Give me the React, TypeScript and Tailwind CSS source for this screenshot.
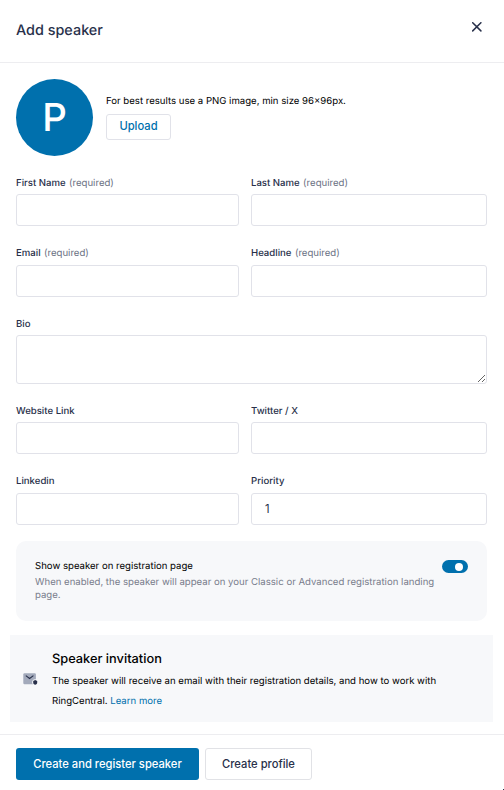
import { useState } from 'react'

type FieldProps = {
  label: string
  required?: boolean
  raised?: boolean
  value?: string
}

const Field = ({ label, required, raised, value = '' }: FieldProps) => {
  const [text, setText] = useState(value)

  return (
    <label className={`block ${raised ? '-mt-px' : ''}`}>
      <span className={`block text-[9.6px] leading-[14px] font-medium text-[#28304a] ${raised ? 'h-[18px]' : 'h-[17px]'}`}>
        {label}
        {required && <span className="ml-[0.7px] font-normal text-[#6a7183]"> (required)</span>}
      </span>
      <input
        value={text}
        onChange={e => setText(e.target.value)}
        className="block h-8 w-full rounded-[3px] border border-[#e1e2e9] bg-white px-[13px] text-[11.2px] text-[#28304a] outline-none"
      />
    </label>
  )
}

const MailIcon = () => (
  <svg width="15" height="13" viewBox="0 0 15 13" fill="none">
    <rect x="0.3" y="0.2" width="12.6" height="11" rx="1.2" fill="#a3aabb" />
    <path d="M2.8 2.6L6.6 5.5L10.4 2.6" stroke="#28304a" strokeWidth="1.1" />
    <circle cx="12.2" cy="9.2" r="3" fill="#f7f8fa" />
    <path d="M12.2 7.1l2 1v1.6c0 .9-.8 1.6-2 2.1-1.2-.5-2-1.2-2-2.1V8.1z" fill="#28304a" />
  </svg>
)

const App = () => {
  const [bio, setBio] = useState('')
  const [visible, setVisible] = useState(true)

  return (
    <div className="relative h-[790px] w-[504px] overflow-hidden bg-white font-['Inter',sans-serif] text-black antialiased [text-rendering:geometricPrecision]">
      {/* Header */}
      <header className="flex h-[63px] items-start justify-between border-b border-[#ededf0] pr-[22px] pl-4">
        <h1 className="mt-[21px] text-[14.4px] leading-5 font-medium text-[#28304a]">Add speaker</h1>
        <button aria-label="Close" className="mt-[22px]">
          <svg width="10" height="10" viewBox="0 0 10 10" stroke="#28304a" strokeWidth="1.5" strokeLinecap="round">
            <path d="M0.7 0.7L8.9 8.9M8.9 0.7L0.7 8.9" />
          </svg>
        </button>
      </header>

      <main className="h-[671px] pt-4">
        {/* Photo */}
        <div className="ml-4 flex h-[77px]">
          <div className="flex size-[77px] items-center justify-center rounded-full bg-[#0070ad] pt-0.5 text-[38.4px] leading-none font-medium text-white">
            P
          </div>
          <div className="ml-[13px] pt-4">
            <p className="text-[9.6px] leading-[14px]">For best results use a PNG image, min size 96×96px.</p>
            <button className="mt-[5px] h-[26px] w-[65px] rounded-[3px] border border-[#e1e2e9] pb-0.5 text-[11.2px] font-medium text-[#0070ad]">
              Upload
            </button>
          </div>
        </div>

        {/* Profile fields */}
        <div className="mt-[21px] ml-4 w-[471px]">
          <div className="grid grid-cols-[223px_236px] gap-x-3 gap-y-[22px]">
            <Field label="First Name" required />
            <Field label="Last Name" required />
            <Field label="Email" required raised />
            <Field label="Headline" required raised />
          </div>
          <label className="mt-[21px] block">
            <span className="block h-[17px] text-[9.6px] leading-[14px] font-medium text-[#28304a]">Bio</span>
            <textarea
              value={bio}
              onChange={e => setBio(e.target.value)}
              className="block h-[49px] w-full resize rounded-[3px] border border-[#e1e2e9] p-2 text-[11.2px] outline-none"
            />
          </label>
          <div className="mt-[21px] grid grid-cols-[223px_236px] gap-x-3 gap-y-[22px]">
            <Field label="Website Link" />
            <Field label="Twitter / X" />
            <Field label="Linkedin" raised />
            <Field label="Priority" value="1" raised />
          </div>
        </div>

        {/* Visibility */}
        <section className="mt-4 ml-4 flex h-20 w-[471px] items-start justify-between rounded-[10px] bg-[#f7f8fa] px-[19px] pt-[18px]">
          <div className="w-[403px] text-[9.6px]">
            <p className="mb-[2px] leading-[15px]">Show speaker on registration page</p>
            <p className="leading-[13px] text-[#797d8c]">
              When enabled, the speaker will appear on your Classic or Advanced registration landing page.
            </p>
          </div>
          <button
            role="switch"
            aria-checked={visible}
            aria-label="Show speaker on registration page"
            onClick={() => setVisible(!visible)}
            className={`mt-px flex h-[13px] w-[26px] items-center rounded-full px-[5px] ${visible ? 'justify-end bg-[#0070ad]' : 'justify-start bg-[#a3aabb]'}`}
          >
            <span className="size-2 rounded-full bg-white" />
          </button>
        </section>

        {/* Invitation */}
        <section className="mt-[14px] ml-[10px] flex h-[87px] w-[483px] items-start bg-[#f7f8fa] pl-[13px]">
          <div className="mt-[38px] w-[29px]">
            <MailIcon />
          </div>
          <div className="w-[400px] pt-[15px]">
            <h2 className="text-[12.8px] leading-5 font-medium">Speaker invitation</h2>
            <p className="mt-[2px] text-[9.6px] leading-5">
              The speaker will receive an email with their registration details, and how to work with RingCentral.{' '}
              <a href="#" className="text-[#0070ad]">Learn more</a>
            </p>
          </div>
        </section>
      </main>

      {/* Actions */}
      <footer className="flex gap-[6px] border-t border-[#ededf0] pt-[13px] pl-4">
        <button className="h-8 w-[183px] rounded-[3px] bg-[#0070ad] pt-px text-[11.2px] font-medium text-white">
          Create and register speaker
        </button>
        <button className="h-8 w-[107px] rounded-[3px] border border-[#e1e2e6] pt-px text-[11.2px] font-medium text-[#28304a]">
          Create profile
        </button>
      </footer>
      <span className="absolute right-0 bottom-0 size-px bg-[#28304a]" />
    </div>
  )
}

export default App
